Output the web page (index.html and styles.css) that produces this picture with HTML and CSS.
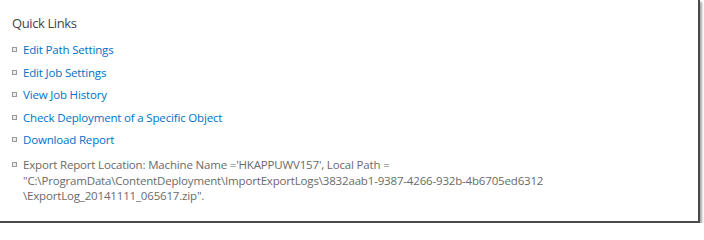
FILE: index.html
```html
<!DOCTYPE html>
<html>
<head>
<meta charset="utf-8">
<link rel="stylesheet" href="styles.css">
</head>
<body>
<div class="frame">
  <h2 class="title">Quick Links</h2>
  <ul class="links">
    <li><a href="#">Edit Path Settings</a></li>
    <li><a href="#">Edit Job Settings</a></li>
    <li><a href="#">View Job History</a></li>
    <li><a href="#">Check Deployment of a Specific Object</a></li>
    <li><a href="#">Download Report</a></li>
    <li class="info">Export Report Location: Machine Name ='HKAPPUWV157', Local Path =<br>"C:\ProgramData\ContentDeployment\ImportExportLogs\3832aab1-9387-4266-932b-4b6705ed6312<br>\ExportLog_20141111_065617.zip".</li>
  </ul>
</div>
</body>
</html>
```
FILE: styles.css
```css
html, body {
  margin: 0;
  padding: 0;
  background: #ffffff;
}
.frame {
  width: 698px;
  height: 221px;
  box-sizing: content-box;
  background: #fff;
  border-right: 2px solid #4a4a4a;
  border-bottom: 2px solid #4a4a4a;
  box-shadow: 2px 2px 2px rgba(0,0,0,0.35);
  font-family: "Open Sans", "Noto Sans", sans-serif;
}
.title {
  margin: 0;
  padding: 14px 0 0 12px;
  font-size: 13px;
  letter-spacing: -0.4px;
  font-weight: 400;
  color: #444;
  line-height: 18px;
}
.links {
  list-style: none;
  margin: 0;
  padding: 10px 0 0 12px;
}
.links li {
  display: flex;
  position: relative;
  padding-left: 11px;
  font-size: 11.5px;
  letter-spacing: -0.17px;
  line-height: 15.5px;
  margin-bottom: 7px;
  color: #666;
}
.links li::before {
  content: "";
  position: absolute;
  left: 0;
  top: 5px;
  width: 3px;
  height: 3px;
  border: 1px solid #999;
  background: #eee;
}
.links a {
  color: #0072c6;
  text-decoration: none;
}
.links li.info {
  display: block;
  color: #6a6a6a;
  margin-top: 9.5px;
}
```
